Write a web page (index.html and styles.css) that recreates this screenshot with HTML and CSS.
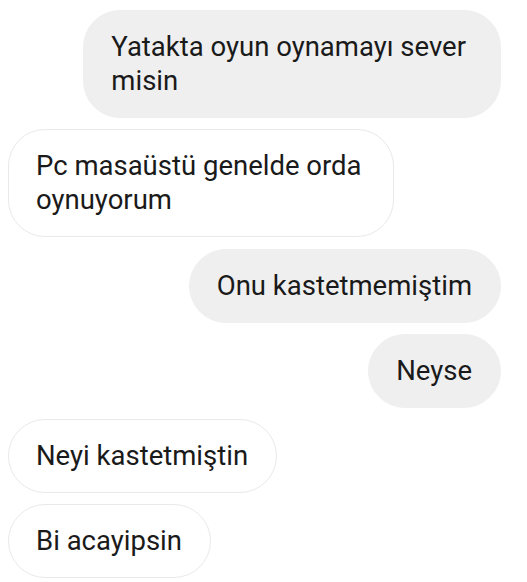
FILE: index.html
```html
<!DOCTYPE html>
<html lang="tr">
<head>
<meta charset="utf-8">
<link rel="stylesheet" href="styles.css">
</head>
<body>
<div class="chat">
  <div class="msg out wrap">Yatakta oyun oynamayı sever<br>misin</div>
  <div class="msg in wrap">Pc masaüstü genelde orda<br>oynuyorum</div>
  <div class="msg out">Onu kastetmemiştim</div>
  <div class="msg out">Neyse</div>
  <div class="msg in">Neyi kastetmiştin</div>
  <div class="msg in">Bi acayipsin</div>
</div>
</body>
</html>
```
FILE: styles.css
```css
* { box-sizing: border-box; }
html, body { margin: 0; padding: 0; background: #ffffff; }
body { width: 527px; height: 582px; overflow: hidden; }
.chat {
  display: flex;
  flex-direction: column;
  gap: 11.25px;
  padding: 10px 26px 0 8px;
  font-family: Roboto, "Noto Sans", sans-serif;
  font-size: 27.5px;
  line-height: 34px;
  color: #1a1a1a;
}
.msg {
  padding: 19px 28px 19px 27px;
  border-radius: 37px;
  white-space: nowrap;
}
.msg.wrap { padding-right: 34px; }
.in.wrap { padding-right: 31px; }
.out {
  align-self: flex-end;
  background: #efefef;
  border: 1px solid #efefef;
}
.in {
  align-self: flex-start;
  background: #ffffff;
  border: 1px solid #e9e9e9;
}
```
